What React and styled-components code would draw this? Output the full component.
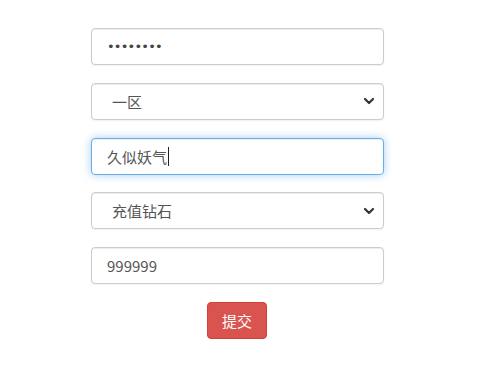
import React from "react";
import styled, { createGlobalStyle } from "styled-components";

const Global = createGlobalStyle`
  html, body { margin: 0; padding: 0; background: #fff; }
  body { font-family: "Noto Sans CJK SC", "Noto Sans", sans-serif; color: #555; }
`;

const Form = styled.form`
  display: flex;
  flex-direction: column;
  gap: 17.8px;
  width: 293px;
  margin: 0 0 0 91px;
  padding-top: 28px;
`;

const Field = styled.div`
  box-sizing: border-box;
  height: 37px;
  border: 1px solid ${(p) => (p.$focus ? "#66afe9" : "#ccc")};
  border-radius: 4px;
  background: #fff;
  box-shadow: ${(p) =>
    p.$focus
      ? "inset 0 1px 1px rgba(0,0,0,.075), 0 0 8px rgba(102,175,233,.6)"
      : "inset 0 1px 1px rgba(0,0,0,.075), 0 1px 2px rgba(0,0,0,.06)"};
  display: flex;
  align-items: center;
  padding: 0 ${(p) => (p.$select ? "8px" : "15px")} 0 ${(p) => (p.$select ? "20px" : "15px")};
  font-size: 15px;
  color: #555;
`;

const Value = styled.span`
  flex: 1;
  display: flex;
  align-items: center;
`;

const Dots = styled.span`
  font-size: 13px;
  letter-spacing: -0.8px;
  color: #444;
  font-family: "DejaVu Sans", sans-serif;
`;

const Caret = styled.span`
  display: inline-block;
  width: 1px;
  height: 19px;
  background: #222;
  margin-left: 1px;
`;

const ButtonRow = styled.div`
  display: flex;
  justify-content: center;
`;

const Button = styled.button`
  box-sizing: border-box;
  width: 60px;
  height: 37px;
  border: 1px solid #d43f3a;
  border-radius: 4px;
  background: #d9534f;
  color: #fff;
  font-family: "Noto Sans CJK SC", sans-serif;
  font-size: 15px;
  padding: 0;
  margin-left: -1px;
`;

const Chevron = () => (
  <svg width="12" height="10" viewBox="0 0 12 10">
    <path d="M2 3 L6 7 L10 3" fill="none" stroke="#333" strokeWidth="2.2" strokeLinecap="round" strokeLinejoin="round" />
  </svg>
);

export default function App() {
  return (
    <>
      <Global />
      <Form onSubmit={(e) => e.preventDefault()}>
        <Field>
          <Dots>••••••••</Dots>
        </Field>
        <Field $select>
          <Value>一区</Value>
          <Chevron />
        </Field>
        <Field $focus>
          <Value>久似妖气<Caret /></Value>
        </Field>
        <Field $select>
          <Value>充值钻石</Value>
          <Chevron />
        </Field>
        <Field>
          <Value>999999</Value>
        </Field>
        <ButtonRow>
          <Button type="submit">提交</Button>
        </ButtonRow>
      </Form>
    </>
  );
}
